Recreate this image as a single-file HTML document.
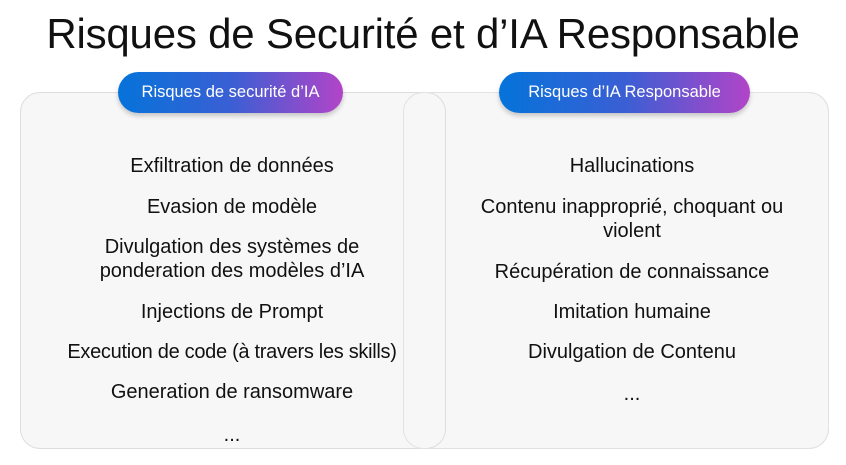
<!DOCTYPE html>
<html><head><meta charset="utf-8"><style>
body{margin:0;width:846px;height:465px;background:#fff;font-family:"Liberation Sans",sans-serif;position:relative;overflow:hidden;color:#111}
.t{position:absolute;top:10px;left:0;width:846px;text-align:center;font-size:42px;letter-spacing:-0.2px}
.box{position:absolute;top:92px;height:357px;width:426px;border:1px solid #ddd;border-radius:20px;background:#f7f7f7;box-sizing:border-box}
.pill{position:absolute;top:72px;height:41px;border-radius:21px;background:linear-gradient(90deg,#0573da,#3a5fd4 50%,#b244c8);color:#fff;font-size:16.5px;display:flex;align-items:center;justify-content:center;box-shadow:0 3px 5px rgba(0,0,0,.2)}
.i{position:absolute;font-size:20px;text-align:center;width:420px;line-height:24px;white-space:nowrap}
</style></head><body>
<div class="t">Risques de Securité et d’IA Responsable</div>
<div class="box" style="left:403px"></div>
<div class="box" style="left:20px"></div>
<div class="box" style="left:403px;background:transparent;border-color:#e2e2e2"></div>
<div class="pill" style="left:118px;width:225px">Risques de securité d’IA</div>
<div class="pill" style="left:499px;width:251px">Risques d’IA Responsable</div>
<div class="i" style="left:22px;top:154px">Exfiltration de données</div>
<div class="i" style="left:22px;top:195px">Evasion de modèle</div>
<div class="i" style="left:22px;top:235px">Divulgation des systèmes de<br>ponderation des modèles d’IA</div>
<div class="i" style="left:22px;top:300px">Injections de Prompt</div>
<div class="i" style="left:22px;top:340px;letter-spacing:-0.3px">Execution de code (à travers les skills)</div>
<div class="i" style="left:22px;top:380px">Generation de ransomware</div>
<div class="i" style="left:22px;top:423px">...</div>
<div class="i" style="left:422px;top:154px">Hallucinations</div>
<div class="i" style="left:422px;top:195px">Contenu inapproprié, choquant ou<br>violent</div>
<div class="i" style="left:422px;top:260px">Récupération de connaissance</div>
<div class="i" style="left:422px;top:300px">Imitation humaine</div>
<div class="i" style="left:422px;top:340px">Divulgation de Contenu</div>
<div class="i" style="left:422px;top:382px">...</div>
</body></html>
